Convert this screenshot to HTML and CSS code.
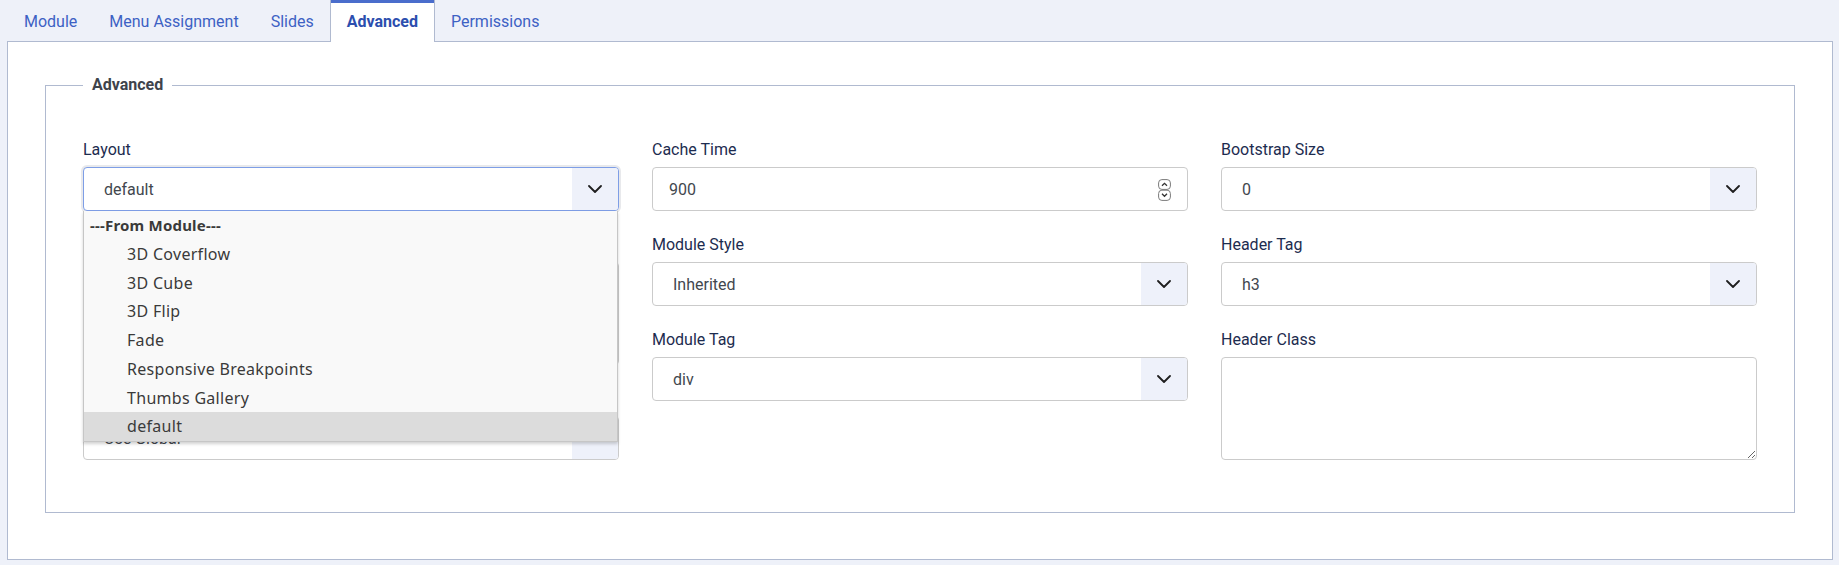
FILE: index.html
```html
<!DOCTYPE html>
<html lang="en">
<head>
<meta charset="utf-8">
<title>Module - Advanced</title>
<link rel="stylesheet" href="styles.css">
</head>
<body>
<div class="page">
  <ul class="tabs">
    <li class="tab">Module</li>
    <li class="tab">Menu Assignment</li>
    <li class="tab">Slides</li>
    <li class="tab active">Advanced</li>
    <li class="tab">Permissions</li>
  </ul>
  <div class="panel">
    <fieldset class="options">
      <legend>Advanced</legend>
      <div class="grid">
        <div class="col">
          <div class="group">
            <label>Layout</label>
            <div class="select-wrap">
              <div class="control select focus">
                <span class="value">default</span>
                <span class="caret"><svg width="14" height="8" viewBox="0 0 14 8"><path d="M1 1l6 6 6-6" fill="none" stroke="#1f1f1f" stroke-width="1.8" stroke-linecap="round" stroke-linejoin="round"/></svg></span>
              </div>
              <div class="dropdown">
                <div class="dd-row dd-head">---From Module---</div>
                <div class="dd-row dd-item">3D Coverflow</div>
                <div class="dd-row dd-item">3D Cube</div>
                <div class="dd-row dd-item">3D Flip</div>
                <div class="dd-row dd-item">Fade</div>
                <div class="dd-row dd-item">Responsive Breakpoints</div>
                <div class="dd-row dd-item">Thumbs Gallery</div>
                <div class="dd-row dd-item sel">default</div>
              </div>
            </div>
          </div>
          <div class="group">
            <label>Module Class</label>
            <textarea class="area"></textarea>
          </div>
          <div class="group">
            <label>Caching</label>
            <div class="control select">
              <span class="value">Use Global</span>
              <span class="caret"><svg width="14" height="8" viewBox="0 0 14 8"><path d="M1 1l6 6 6-6" fill="none" stroke="#1f1f1f" stroke-width="1.8" stroke-linecap="round" stroke-linejoin="round"/></svg></span>
            </div>
          </div>
        </div>
        <div class="col">
          <div class="group">
            <label>Cache Time</label>
            <div class="control input">
              <span class="value">900</span>
              <span class="spin"><svg width="13" height="22" viewBox="0 0 13 22"><rect x="0.6" y="0.6" width="11.8" height="9.8" rx="3.3" fill="#fff" stroke="#7a7a7a" stroke-width="1"/><path d="M4 6.8l2.5-2.5 2.5 2.5" fill="none" stroke="#333" stroke-width="1.3"/><rect x="0.6" y="11.2" width="11.8" height="10.2" rx="3.3" fill="#fff" stroke="#7a7a7a" stroke-width="1"/><path d="M4 14.8l2.5 2.5 2.5-2.5" fill="none" stroke="#333" stroke-width="1.3"/></svg></span>
            </div>
          </div>
          <div class="group">
            <label>Module Style</label>
            <div class="control select">
              <span class="value">Inherited</span>
              <span class="caret"><svg width="14" height="8" viewBox="0 0 14 8"><path d="M1 1l6 6 6-6" fill="none" stroke="#1f1f1f" stroke-width="1.8" stroke-linecap="round" stroke-linejoin="round"/></svg></span>
            </div>
          </div>
          <div class="group">
            <label>Module Tag</label>
            <div class="control select">
              <span class="value">div</span>
              <span class="caret"><svg width="14" height="8" viewBox="0 0 14 8"><path d="M1 1l6 6 6-6" fill="none" stroke="#1f1f1f" stroke-width="1.8" stroke-linecap="round" stroke-linejoin="round"/></svg></span>
            </div>
          </div>
        </div>
        <div class="col">
          <div class="group">
            <label>Bootstrap Size</label>
            <div class="control select">
              <span class="value">0</span>
              <span class="caret"><svg width="14" height="8" viewBox="0 0 14 8"><path d="M1 1l6 6 6-6" fill="none" stroke="#1f1f1f" stroke-width="1.8" stroke-linecap="round" stroke-linejoin="round"/></svg></span>
            </div>
          </div>
          <div class="group">
            <label>Header Tag</label>
            <div class="control select">
              <span class="value">h3</span>
              <span class="caret"><svg width="14" height="8" viewBox="0 0 14 8"><path d="M1 1l6 6 6-6" fill="none" stroke="#1f1f1f" stroke-width="1.8" stroke-linecap="round" stroke-linejoin="round"/></svg></span>
            </div>
          </div>
          <div class="group">
            <label>Header Class</label>
            <textarea class="area"></textarea>
          </div>
        </div>
      </div>
    </fieldset>
  </div>
</div>
</body>
</html>
```

FILE: styles.css
```css
* { box-sizing: border-box; }

html, body {
  margin: 0;
  background: #eef1f9;
  font-family: Roboto, "Liberation Sans", sans-serif;
}

.page {
  padding: 0 6px 0 7px;
  height: 565px;
}

.tabs {
  display: flex;
  align-items: flex-start;
  list-style: none;
  margin: 0;
  padding: 0 0 0 1px;
  height: 41px;
  position: relative;
  z-index: 2;
}

.tab {
  height: 41px;
  padding: 0 15px;
  line-height: 44px;
  font-size: 16px;
  color: #3d61c4;
  border-left: 1px solid transparent;
  border-right: 1px solid transparent;
  white-space: nowrap;
}

.tab.active {
  height: 42px;
  padding: 0 16px;
  background: #fff;
  border-left-color: #b0bad0;
  border-right-color: #b0bad0;
  box-shadow: inset 0 3px 0 #4a6dcc;
  color: #2c4eae;
  font-weight: 700;
}

.panel {
  background: #fff;
  border: 1px solid #b0bad0;
  padding: 31px 37px 46px;
}

.options {
  margin: 0;
  min-width: 0;
  border: 1px solid #b0bad0;
  padding: 41px 37px 30px;
}

.options legend {
  padding: 0 9px;
  font-size: 16px;
  line-height: 24px;
  font-weight: 700;
  color: #3e434b;
}

.grid {
  display: grid;
  grid-template-columns: repeat(3, 1fr);
  column-gap: 33px;
}

.group {
  margin-bottom: 22px;
}

.group label {
  display: block;
  font-size: 16px;
  line-height: 24px;
  margin-bottom: 5px;
  color: #1d2c4f;
}

.control {
  height: 44px;
  display: flex;
  align-items: center;
  background: #fff;
  border: 1px solid #cbcbcb;
  border-radius: 4px;
  font-size: 16px;
  color: #42474e;
}

.control .value {
  flex: 1;
  white-space: nowrap;
  overflow: hidden;
}

.select .value {
  padding-left: 20px;
}

.input .value {
  padding-left: 16px;
}

.caret {
  width: 46px;
  align-self: stretch;
  display: flex;
  align-items: center;
  justify-content: center;
  background: #eef1fa;
  border-radius: 0 3px 3px 0;
}

.caret svg { display: block; }

.spin {
  margin-right: 16px;
  margin-top: 2px;
  display: flex;
}

.select.focus {
  border-color: #7e9ee6;
  box-shadow: 0 0 0 2px #e8e9ec;
}

.select-wrap {
  position: relative;
}

.dropdown {
  position: absolute;
  left: 0;
  top: 100%;
  width: calc(100% - 1px);
  z-index: 5;
  background: #f9f9f9;
  border: 1px solid #c6c6c6;
  border-top: 0;
  box-shadow: 0 2px 3px rgba(0, 0, 0, 0.18);
  font-family: "Noto Sans", "Open Sans", sans-serif;
  font-size: 16px;
  letter-spacing: 0.3px;
  color: #3a3a3a;
}

.dd-row {
  height: 28.75px;
  line-height: 28.75px;
  white-space: nowrap;
}

.dd-head {
  padding-left: 6px;
  font-size: 15px;
  letter-spacing: 0.2px;
  font-weight: 700;
}

.dd-item {
  padding-left: 43px;
}

.dd-item.sel {
  background: #dcdcdc;
}

.area {
  display: block;
  width: 100%;
  height: 103px;
  margin: 0;
  border: 1px solid #cbcbcb;
  border-radius: 4px;
  background: #fff;
  font-family: Roboto, sans-serif;
  font-size: 16px;
}
```
